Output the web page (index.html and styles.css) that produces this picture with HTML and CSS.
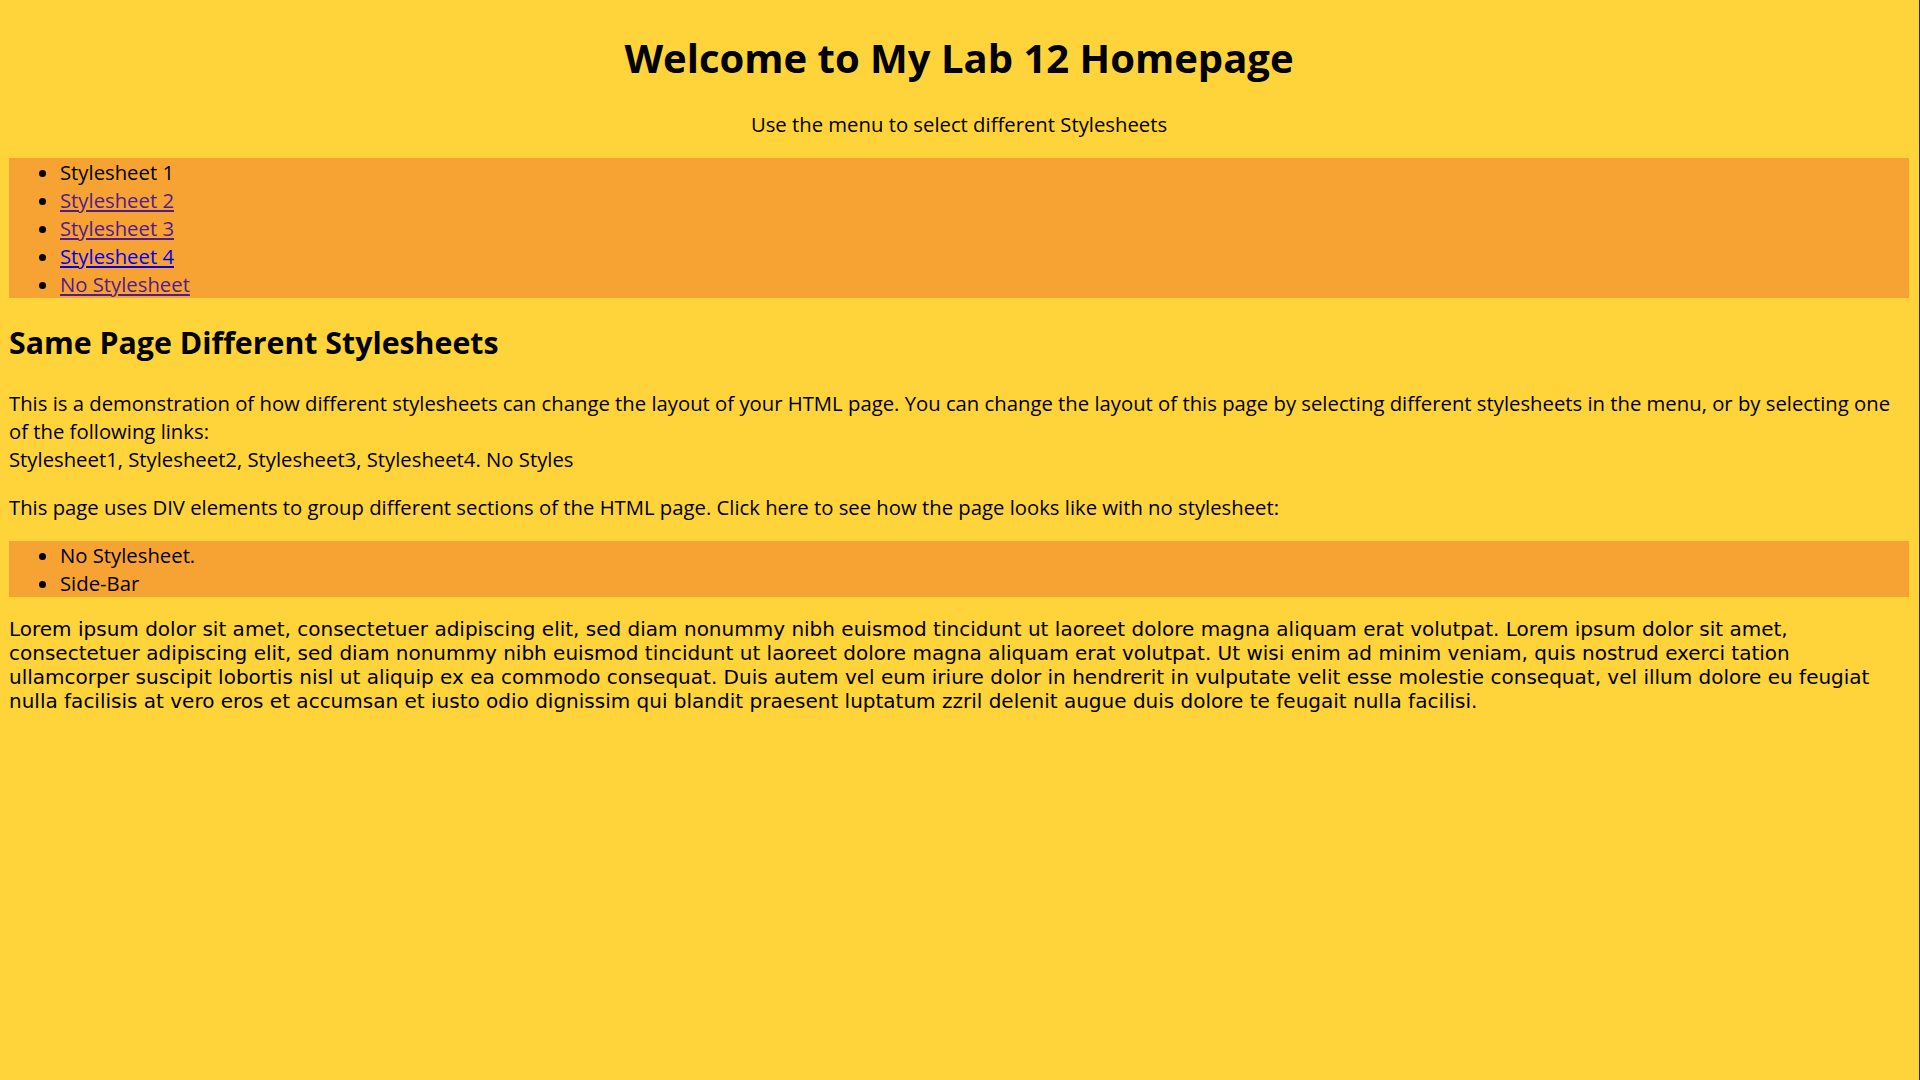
FILE: index.html
```html
<!DOCTYPE html>
<html lang="en">
<head>
<meta charset="utf-8">
<title>Lab 12 Homepage</title>
<link rel="stylesheet" href="styles.css">
</head>
<body>
<div class="header">
  <h1 class="title">Welcome to My Lab 12 Homepage</h1>
  <p class="subtitle">Use the menu to select different Stylesheets</p>
</div>
<div class="menu">
  <ul class="list">
    <li>Stylesheet 1</li>
    <li><a class="link visited" href="#s2">Stylesheet 2</a></li>
    <li><a class="link visited" href="#s3">Stylesheet 3</a></li>
    <li><a class="link" href="#s4">Stylesheet 4</a></li>
    <li><a class="link visited" href="#none">No Stylesheet</a></li>
  </ul>
</div>
<div class="content">
  <h2 class="heading">Same Page Different Stylesheets</h2>
  <p class="text">This is a demonstration of how different stylesheets can change the layout of your HTML page. You can change the layout of this page by selecting different stylesheets in the menu, or by selecting one of the following links:<br>Stylesheet1, Stylesheet2, Stylesheet3, Stylesheet4. No Styles</p>
  <p class="text">This page uses DIV elements to group different sections of the HTML page. Click here to see how the page looks like with no stylesheet:</p>
</div>
<div class="sidebar">
  <ul class="list">
    <li>No Stylesheet.</li>
    <li>Side-Bar</li>
  </ul>
</div>
<p class="lorem">Lorem ipsum dolor sit amet, consectetuer adipiscing elit, sed diam nonummy nibh euismod tincidunt ut laoreet dolore magna aliquam erat volutpat. Lorem ipsum dolor sit amet, consectetuer adipiscing elit, sed diam nonummy nibh euismod tincidunt ut laoreet dolore magna aliquam erat volutpat. Ut wisi enim ad minim veniam, quis nostrud exerci tation ullamcorper suscipit lobortis nisl ut aliquip ex ea commodo consequat. Duis autem vel eum iriure dolor in hendrerit in vulputate velit esse molestie consequat, vel illum dolore eu feugiat nulla facilisis at vero eros et accumsan et iusto odio dignissim qui blandit praesent luptatum zzril delenit augue duis dolore te feugait nulla facilisi.</p>
</body>
</html>
```
FILE: styles.css
```css
html {
  background: #ffd33a;
  border-right: 1px solid #2e2e2e;
  min-height: 100%;
}

body {
  margin: 0 10px 0 9px;
  background: #ffd33a;
  color: #000;
  font-family: "Open Sans", "DejaVu Sans", sans-serif;
  font-size: 20.3px;
  line-height: 28px;
}

.header {
  text-align: center;
}

.title {
  font-size: 40px;
  line-height: 56px;
  font-weight: 700;
  margin: 26.8px 0 23.8px;
  padding-top: 3px;
}

.subtitle {
  margin: 20px 0;
}

.menu,
.sidebar {
  background: #f6a334;
}

.list {
  margin: 16px 0;
  padding-left: 51px;
}

.link {
  color: #0000ee;
  text-decoration: underline;
}

.link.visited {
  color: #551a8b;
}

.heading {
  font-size: 30.3px;
  line-height: 42px;
  font-weight: 700;
  margin: 24.9px 0;
}

.text {
  margin: 20px 0;
}

.lorem {
  font-family: "DejaVu Sans", sans-serif;
  font-size: 20px;
  line-height: 24px;
  margin: 20px 0;
}
```
